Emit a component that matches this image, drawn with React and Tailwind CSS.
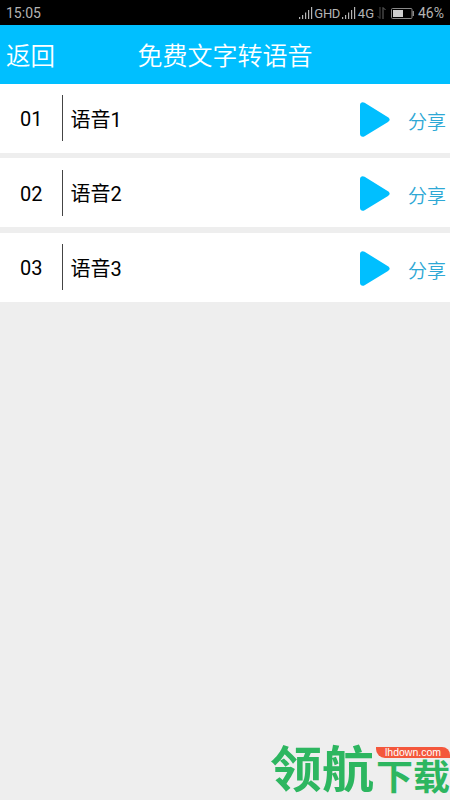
import { useState } from 'react';

const recordings = [
  { id: '01', name: '语音1' },
  { id: '02', name: '语音2' },
  { id: '03', name: '语音3' },
];

function SignalIcon({ className }) {
  return (
    <svg width="14" height="12" viewBox="0 0 14 12" className={className}>
      <g fill="#b4b4b4">
        <rect x="0" y="10" width="1.2" height="2" />
        <rect x="3" y="8" width="1.2" height="4" />
        <rect x="6" y="5.5" width="1.2" height="6.5" />
        <rect x="9" y="3" width="1.2" height="9" />
        <rect x="12" y="0" width="1.2" height="12" />
      </g>
    </svg>
  );
}

function DataIcon() {
  return (
    <svg width="9" height="12" viewBox="0 0 9 12" className="ml-[3px]" fill="none" stroke="#4a4a4a">
      <path d="M3 0v11.5L0.5 9" />
      <path d="M6 12V0.5L8.5 3" stroke="#666" />
    </svg>
  );
}

function BatteryIcon() {
  return (
    <svg width="24" height="11" viewBox="0 0 24 11" className="ml-[5px]">
      <rect x="0.5" y="0.5" width="20.5" height="10" rx="1" fill="none" stroke="#8a8a8a" />
      <rect x="2" y="2" width="10" height="7" fill="#cfcfcf" />
      <rect x="21.5" y="3" width="1.5" height="5" fill="#8a8a8a" />
    </svg>
  );
}

function PlayIcon() {
  return (
    <svg width="30" height="35" viewBox="0 0 30 35" fill="#00bfff">
      <path d="M0 3.2C0 0.6 2.4-0.6 4.6 0.8L28 15.2c2.2 1.4 2.2 3.4 0 4.8L4.6 34.2C2.4 35.6 0 34.4 0 31.8z" />
    </svg>
  );
}

function StatusBar() {
  return (
    <div className="flex h-[25px] items-center bg-black pl-[6px] pr-[6px] pt-[1px] font-[Roboto,sans-serif] text-[14px] leading-none text-[#b4b4b4]">
      <span>15:05</span>
      <div className="ml-auto flex items-center">
        <SignalIcon />
        <span className="ml-[1px] text-[13px]">G</span>
        <span className="text-[13px] tracking-[-0.5px]">HD</span>
        <SignalIcon className="ml-[2px]" />
        <span className="ml-[2px] text-[13px]">4G</span>
        <DataIcon />
        <BatteryIcon />
        <span className="ml-[3px]">46%</span>
      </div>
    </div>
  );
}

function Watermark() {
  return (
    <div className="absolute bottom-[4px] right-0 flex w-[180px] items-end whitespace-nowrap font-bold text-[#2db660]">
      <span className="origin-bottom scale-y-95 text-[52px] leading-[52px]">领航</span>
      <div className="ml-[2px] flex flex-col">
        <div className="h-[11px] w-[74px] rounded-bl-[9px] rounded-tr-[8px] bg-[#f4573c] pl-[9px] font-['Liberation_Sans',sans-serif] text-[10.5px] font-normal leading-[11px] text-white">
          lhdown.com
        </div>
        <span className="mt-[1px] origin-bottom scale-y-95 text-[37px] leading-[37px]">下载</span>
      </div>
    </div>
  );
}

function App() {
  const [playing, setPlaying] = useState(null);

  return (
    <div className="relative h-[800px] w-[450px] overflow-hidden bg-[#eeeeee] font-[Roboto,'Noto_Sans_CJK_SC',sans-serif]">
      <StatusBar />

      <header className="grid h-[58.5px] grid-cols-[1fr_auto_1fr] items-center bg-[#00bfff] pt-[5px] font-[350] text-white">
        <button className="pl-[6px] pt-px text-left text-[24.5px]">返回</button>
        <h1 className="text-[25px]">免费文字转语音</h1>
      </header>

      <div className="flex flex-col gap-[5.5px]">
        {recordings.map((item) => (
          <div key={item.id} className="flex h-[69px] items-center bg-white">
            <span className="w-[62.4px] pl-[20px] pt-[2px] text-[20px] text-black">{item.id}</span>
            <div className="h-[46px] w-px bg-[#444]" />
            <span className="ml-[7px] pt-[3px] text-[20px] text-black">{item.name}</span>
            <button
              className="ml-auto pt-[2px]"
              onClick={() => setPlaying(playing === item.id ? null : item.id)}
            >
              <PlayIcon />
            </button>
            <button className="ml-[18px] mr-[4px] pt-[10px] text-[19px] font-[350] text-[#2ea8d5]">
              分享
            </button>
          </div>
        ))}
      </div>

      <Watermark />
    </div>
  );
}

export default App;
